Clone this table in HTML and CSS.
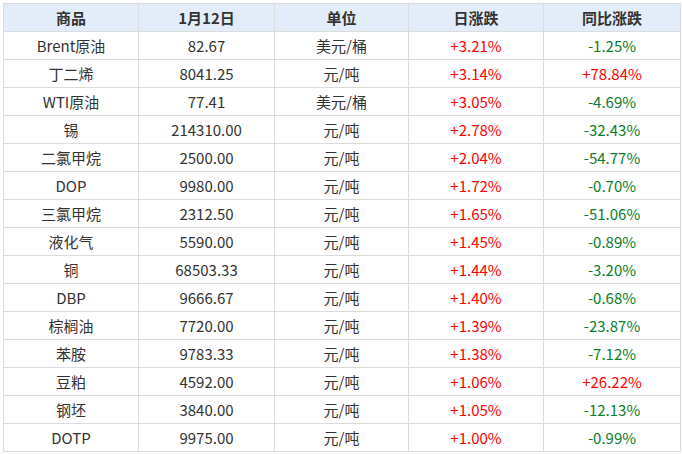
FILE: index.html
```html
<!DOCTYPE html>
<html lang="zh">
<head>
<meta charset="utf-8">
<link rel="stylesheet" href="styles.css">
</head>
<body>
<table class="tbl">
<colgroup><col class="c1"><col class="c2"><col class="c3"><col class="c4"><col class="c5"></colgroup>
<thead>
<tr><th>商品</th><th>1月12日</th><th>单位</th><th>日涨跌</th><th>同比涨跌</th></tr>
</thead>
<tbody>
<tr><td>Brent原油</td><td>82.67</td><td>美元/桶</td><td class="up">+3.21%</td><td class="down">-1.25%</td></tr>
<tr><td>丁二烯</td><td>8041.25</td><td>元/吨</td><td class="up">+3.14%</td><td class="up">+78.84%</td></tr>
<tr><td>WTI原油</td><td>77.41</td><td>美元/桶</td><td class="up">+3.05%</td><td class="down">-4.69%</td></tr>
<tr><td>锡</td><td>214310.00</td><td>元/吨</td><td class="up">+2.78%</td><td class="down">-32.43%</td></tr>
<tr><td>二氯甲烷</td><td>2500.00</td><td>元/吨</td><td class="up">+2.04%</td><td class="down">-54.77%</td></tr>
<tr><td>DOP</td><td>9980.00</td><td>元/吨</td><td class="up">+1.72%</td><td class="down">-0.70%</td></tr>
<tr><td>三氯甲烷</td><td>2312.50</td><td>元/吨</td><td class="up">+1.65%</td><td class="down">-51.06%</td></tr>
<tr><td>液化气</td><td>5590.00</td><td>元/吨</td><td class="up">+1.45%</td><td class="down">-0.89%</td></tr>
<tr><td>铜</td><td>68503.33</td><td>元/吨</td><td class="up">+1.44%</td><td class="down">-3.20%</td></tr>
<tr><td>DBP</td><td>9666.67</td><td>元/吨</td><td class="up">+1.40%</td><td class="down">-0.68%</td></tr>
<tr><td>棕榈油</td><td>7720.00</td><td>元/吨</td><td class="up">+1.39%</td><td class="down">-23.87%</td></tr>
<tr><td>苯胺</td><td>9783.33</td><td>元/吨</td><td class="up">+1.38%</td><td class="down">-7.12%</td></tr>
<tr><td>豆粕</td><td>4592.00</td><td>元/吨</td><td class="up">+1.06%</td><td class="up">+26.22%</td></tr>
<tr><td>钢坯</td><td>3840.00</td><td>元/吨</td><td class="up">+1.05%</td><td class="down">-12.13%</td></tr>
<tr><td>DOTP</td><td>9975.00</td><td>元/吨</td><td class="up">+1.00%</td><td class="down">-0.99%</td></tr>
</tbody>
</table>
</body>
</html>
```
FILE: styles.css
```css
html, body {
  margin: 0;
  padding: 0;
  background: #fff;
}
body {
  padding: 3px;
  font-family: "Noto Sans CJK SC", "Open Sans", sans-serif;
  font-size: 15px;
  color: #333;
}
.tbl {
  border-collapse: collapse;
  table-layout: fixed;
  width: 677px;
}
.c1 { width: 135px; }
.c2 { width: 136px; }
.c3 { width: 134px; }
.c4 { width: 135px; }
.c5 { width: 137px; }
.tbl th, .tbl td {
  border: 1px solid #dcdcdc;
  height: 27px;
  padding: 0;
  text-align: center;
  vertical-align: middle;
  line-height: 20px;
  white-space: nowrap;
}
.tbl th {
  background: #e3edfa;
  font-weight: bold;
  color: #333;
}
.up { color: #ff0000; }
.down { color: #0a7d2c; }
```
